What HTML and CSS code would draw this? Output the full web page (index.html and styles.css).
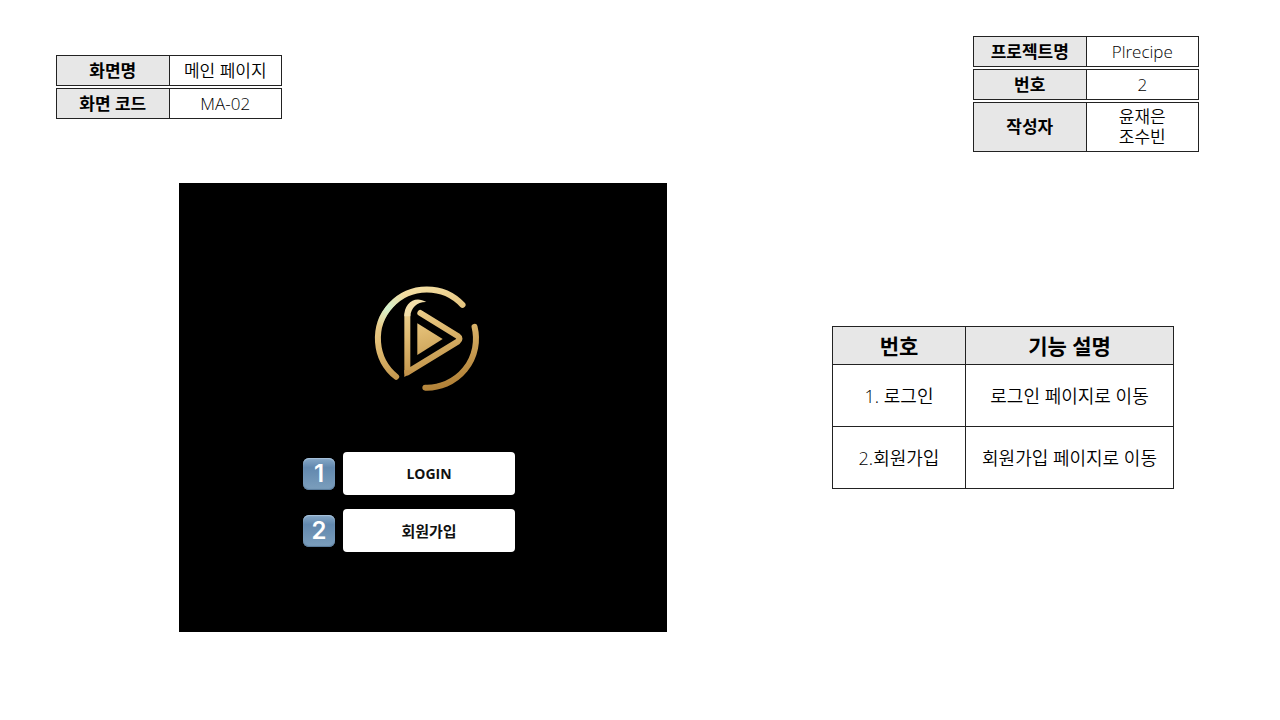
FILE: index.html
```html
<!DOCTYPE html>
<html lang="ko">
<head>
<meta charset="utf-8">
<meta name="viewport" content="width=device-width, initial-scale=1">
<title>메인 페이지</title>
<link rel="stylesheet" href="styles.css">
</head>
<body>
<header class="sheet-header">
  <div class="info info-screen">
    <table class="info-table"><tbody><tr><th scope="row">화면명</th><td>메인 페이지</td></tr></tbody></table>
    <table class="info-table"><tbody><tr><th scope="row">화면 코드</th><td>MA-02</td></tr></tbody></table>
  </div>
  <div class="info">
    <table class="info-table"><tbody><tr><th scope="row">프로젝트명</th><td>Plrecipe</td></tr></tbody></table>
    <table class="info-table"><tbody><tr><th scope="row">번호</th><td>2</td></tr></tbody></table>
    <table class="info-table"><tbody><tr><th scope="row">작성자</th><td class="authors">윤재은<br>조수빈</td></tr></tbody></table>
  </div>
</header>
<main class="content">
  <section class="screen">
    <svg class="logo" viewBox="0 0 375 375" role="img" aria-label="Plrecipe">
      <defs>
        <linearGradient id="gold" gradientUnits="userSpaceOnUse" x1="120" y1="30" x2="220" y2="350">
          <stop offset="0" stop-color="#f6e3aa"/>
          <stop offset="0.45" stop-color="#e0bb72"/>
          <stop offset="1" stop-color="#b07f35"/>
        </linearGradient>
        <radialGradient id="glint" gradientUnits="userSpaceOnUse" cx="68" cy="98" r="62">
          <stop offset="0" stop-color="#d3f3cf"/>
          <stop offset="1" stop-color="#d3f3cf" stop-opacity="0"/>
        </radialGradient>
      </defs>
      <g fill="none" stroke="url(#gold)" stroke-width="18" stroke-linecap="round" stroke-linejoin="round">
        <path d="M93.5 305.2A147 147 0 1 1 292.6 89.8"/>
        <path d="M328.6 155.4A147 147 0 0 1 181 337.9"/>
        <path d="M166 114L278 183Q289 191 278 200L127 292V120"/>
      </g>
      <path d="M93.5 305.2A147 147 0 1 1 292.6 89.8" fill="none" stroke="url(#glint)" stroke-width="18"/>
      <path d="M118 124C117 84 150 60 184 81C157 80 138 97 136 124Z" fill="#f3dfaa"/>
      <path d="M118 285V306L148 288Z" fill="#c4934a"/>
      <path d="M157 145L233 192L157 240Z" fill="url(#gold)"/>
    </svg>
    <ul class="actions">
      <li class="action"><span class="badge">1</span><button class="action-button" type="button">LOGIN</button></li>
      <li class="action"><span class="badge">2</span><button class="action-button action-button-korean" type="button">회원가입</button></li>
    </ul>
  </section>
  <table class="features">
    <thead><tr><th scope="col" class="feature-number">번호</th><th scope="col">기능 설명</th></tr></thead>
    <tbody>
      <tr><td>1. 로그인</td><td>로그인 페이지로 이동</td></tr>
      <tr><td>2.회원가입</td><td>회원가입 페이지로 이동</td></tr>
    </tbody>
  </table>
</main>
</body>
</html>
```
FILE: styles.css
```css
* {
  box-sizing: border-box;
}

body {
  margin: 0;
  background: #fff;
  color: #000;
  font-family: "Open Sans", "Noto Sans CJK KR", sans-serif;
  font-size: 17px;
  font-weight: 350;
  line-height: 20px;
}

.sheet-header {
  display: flex;
  justify-content: space-between;
  align-items: flex-start;
  padding: 36px 81px 0 56px;
}

.info {
  display: flex;
  flex-direction: column;
  gap: 2px;
  width: 226px;
}

.info-screen {
  padding-top: 19px;
}

table {
  border-collapse: collapse;
  table-layout: fixed;
  text-align: center;
}

th,
td {
  padding: 0;
  border: 1px solid #222;
}

th {
  background: #e7e7e7;
  font-weight: 700;
}

.info-table {
  width: 100%;
}

.info-table th,
.info-table td {
  height: 30px;
}

.info-table .authors {
  padding: 4px 0;
}

.content {
  display: flex;
  justify-content: space-between;
  align-items: flex-start;
  padding: 31px 106px 48px 179px;
}

.screen {
  display: flex;
  flex-direction: column;
  align-items: center;
  width: 488px;
  padding: 92px 0 80px;
  background: #000;
}

.logo {
  width: 125px;
  margin-left: 8px;
}

.actions {
  display: flex;
  flex-direction: column;
  gap: 14px;
  margin: 52px 0 0;
  padding: 0 28px 0 0;
  list-style: none;
}

.action {
  display: flex;
  align-items: center;
  gap: 8px;
}

.badge {
  width: 32px;
  border-radius: 6px;
  background: linear-gradient(#87a9c8, #6288ae 30%, #7c9fbd);
  box-shadow: inset 0 1px 1px #a9c4dc, inset 0 -1px 1px #58799a;
  color: #fff;
  font-family: "Inter", sans-serif;
  font-size: 24px;
  font-weight: 600;
  line-height: 32px;
  text-align: center;
}

.action-button {
  width: 172px;
  height: 43px;
  border: 0;
  border-radius: 4px;
  background: #fff;
  color: #111;
  font-family: "Open Sans", "Noto Sans CJK KR", sans-serif;
  font-size: 14px;
  font-weight: 700;
}

.action-button-korean {
  font-size: 15px;
}

.features {
  width: 342px;
  margin-top: 143px;
  font-size: 18px;
}

.features th {
  height: 38px;
  font-size: 21px;
}

.features td {
  height: 62px;
}

.feature-number {
  width: 133px;
}
```
